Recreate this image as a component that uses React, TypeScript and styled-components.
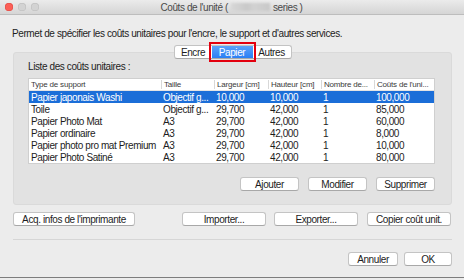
import React from "react";
import styled, { createGlobalStyle } from "styled-components";

const GlobalStyle = createGlobalStyle`
  html, body {
    margin: 0;
    padding: 0;
    background: #ececec;
  }
  body {
    font-family: "Liberation Sans", Arial, sans-serif;
    color: #1d1d1d;
    letter-spacing: -0.4px;
  }
`;

const Window = styled.div`
  width: 464px;
  height: 278px;
  background: #ececec;
  border-bottom: 1px solid #7d7d7d;
  box-sizing: border-box;
  display: flex;
  flex-direction: column;
`;

const TitleBar = styled.div`
  height: 15px;
  box-sizing: border-box;
  border-bottom: 1px solid #bdbdbd;
  background: linear-gradient(#ebebeb, #d5d5d5);
  position: relative;
  display: flex;
  align-items: center;
  justify-content: center;
`;

const Lights = styled.div`
  position: absolute;
  left: 5px;
  top: 3px;
  display: flex;
  gap: 5px;
`;

const Light = styled.span<{ $color: string; $edge: string }>`
  width: 8px;
  height: 8px;
  border-radius: 50%;
  background: ${(p) => p.$color};
  box-shadow: inset 0 0 0 0.5px ${(p) => p.$edge};
`;

const Title = styled.div`
  font-size: 10px;
  color: #4a4a4a;
  display: flex;
  align-items: center;
  margin-left: -1px;
`;

const Blurred = styled.span`
  display: inline-block;
  width: 39px;
  height: 8px;
  margin: 0 3px 0 3px;
  background: linear-gradient(90deg, #d8d8d8 0, #c9c9c9 40%, #d2d2d2 60%, #c8c8c8 100%);
  filter: blur(1px);
`;

const Body = styled.div`
  padding: 12px 12px 0 13px;
  display: flex;
  flex-direction: column;
`;

const Description = styled.div`
  font-size: 10px;
  line-height: 13px;
  height: 13px;
  margin-left: -1px;
  white-space: nowrap;
`;

const Tabs = styled.div`
  margin-top: 5px;
  display: flex;
  justify-content: center;
  position: relative;
  z-index: 1;
`;

const Segment = styled.div`
  display: flex;
  align-items: center;
  height: 14px;
  background: #fff;
  border: 1px solid #c3c3c3;
  border-bottom-color: #a9a9a9;
  border-radius: 3px;
  box-sizing: border-box;
`;

const Tab = styled.div<{ $active?: boolean; $w: number }>`
  width: ${(p) => p.$w}px;
  height: 100%;
  font-size: 10px;
  display: flex;
  align-items: center;
  justify-content: center;
  color: ${(p) => (p.$active ? "#fff" : "#1d1d1d")};
  background: ${(p) => (p.$active ? "linear-gradient(#5aa2fa, #2a7ff5)" : "transparent")};
  position: relative;
  ${(p) =>
    p.$active &&
    `
    &::after {
      content: "";
      position: absolute;
      left: -3px;
      right: -3px;
      top: -4px;
      bottom: -4px;
      border: 2px solid #e3000e;
    }
  `}
`;

const Group = styled.div`
  margin-top: -7px;
  background: #e2e2e2;
  border: 1px solid #dadada;
  border-radius: 3px;
  padding: 8px 16px 13px 14px;
  display: flex;
  flex-direction: column;
`;

const GroupLabel = styled.div`
  font-size: 10px;
  line-height: 12px;
  height: 12px;
`;

const TableBox = styled.div`
  margin-top: 5px;
  height: 86px;
  background: #fff;
  border: 1px solid #cfcfcf;
  box-sizing: border-box;
  display: flex;
  flex-direction: column;
`;

const Row = styled.div<{ $cols: string; $selected?: boolean; $header?: boolean }>`
  display: grid;
  grid-template-columns: ${(p) => p.$cols};
  height: ${(p) => (p.$header ? 11 : 12)}px;
  align-items: center;
  background: ${(p) => (p.$selected ? "#1b6ed8" : "transparent")};
  color: ${(p) => (p.$selected ? "#fff" : "#1d1d1d")};
  font-size: ${(p) => (p.$header ? "8px" : "10px")};
  ${(p) => p.$header && "color: #3a3a3a; letter-spacing: -0.2px; border-bottom: 1px solid #e4e4e4;"}
`;

const HeadCell = styled.div<{ $first?: boolean }>`
  height: 9px;
  line-height: 9px;
  padding-left: 2px;
  white-space: nowrap;
  overflow: hidden;
  border-left: ${(p) => (p.$first ? "none" : "1px solid #d8d8d8")};
`;

const Cell = styled.div`
  padding-left: 2px;
  white-space: nowrap;
  overflow: hidden;
`;

const ButtonRow = styled.div<{ $mt: number; $gap: number; $justify?: string }>`
  margin-top: ${(p) => p.$mt}px;
  display: flex;
  gap: ${(p) => p.$gap}px;
  justify-content: ${(p) => p.$justify || "flex-end"};
`;

const Button = styled.div<{ $w: number; $ml?: number }>`
  width: ${(p) => p.$w}px;
  height: 14px;
  margin-left: ${(p) => p.$ml || 0}px;
  box-sizing: border-box;
  background: #fff;
  border: 1px solid #c4c4c4;
  border-bottom-color: #a8a8a8;
  border-radius: 3px;
  font-size: 10px;
  display: flex;
  align-items: center;
  justify-content: center;
  white-space: nowrap;
`;

const Separator = styled.div`
  margin-top: 13px;
  height: 1px;
  background: #d6d6d6;
`;

const cols = "132px 53px 54px 53px 53px 1fr";

const headers = [
  "Type de support",
  "Taille",
  "Largeur [cm]",
  "Hauteur [cm]",
  "Nombre de...",
  "Coûts de l'uni...",
];

const rows = [
  ["Papier japonais Washi", "Objectif g...", "10,000", "10,000", "1", "100,000"],
  ["Toile", "Objectif g...", "29,700", "42,000", "1", "85,000"],
  ["Papier Photo Mat", "A3", "29,700", "42,000", "1", "60,000"],
  ["Papier ordinaire", "A3", "29,700", "42,000", "1", "8,000"],
  ["Papier photo pro mat Premium", "A3", "29,700", "42,000", "1", "10,000"],
  ["Papier Photo Satiné", "A3", "29,700", "42,000", "1", "80,000"],
];

const App: React.FC = () => {
  return (
    <>
      <GlobalStyle />
      <Window>
        <TitleBar>
          <Lights>
            <Light $color="#fc5f57" $edge="#de4640" />
            <Light $color="#d3d3d3" $edge="#bcbcbc" />
            <Light $color="#d3d3d3" $edge="#bcbcbc" />
          </Lights>
          <Title>
            Coûts de l'unité (<Blurred /> series )
          </Title>
        </TitleBar>
        <Body>
          <Description>
            Permet de spécifier les coûts unitaires pour l'encre, le support et d'autres services.
          </Description>
          <Tabs>
            <Segment>
              <Tab $w={37}>Encre</Tab>
              <Tab $w={41} $active>
                Papier
              </Tab>
              <Tab $w={38}>Autres</Tab>
            </Segment>
          </Tabs>
          <Group>
            <GroupLabel>Liste des coûts unitaires :</GroupLabel>
            <TableBox>
              <Row $cols={cols} $header>
                {headers.map((h, i) => (
                  <HeadCell key={h} $first={i === 0}>
                    {h}
                  </HeadCell>
                ))}
              </Row>
              {rows.map((r, i) => (
                <Row key={r[0]} $cols={cols} $selected={i === 0}>
                  {r.map((c, j) => (
                    <Cell key={j}>{c}</Cell>
                  ))}
                </Row>
              ))}
            </TableBox>
            <ButtonRow $mt={13} $gap={9}>
              <Button $w={59}>Ajouter</Button>
              <Button $w={59}>Modifier</Button>
              <Button $w={59}>Supprimer</Button>
            </ButtonRow>
          </Group>
          <ButtonRow $mt={7} $gap={8} $justify="flex-start">
            <Button $w={122}>Acq. infos de l'imprimante</Button>
            <Button $w={84} $ml={39}>
              Importer...
            </Button>
            <Button $w={84}>Exporter...</Button>
            <Button $w={84} $ml={1}>
              Copier coût unit.
            </Button>
          </ButtonRow>
          <Separator />
          <ButtonRow $mt={12} $gap={6}>
            <Button $w={50}>Annuler</Button>
            <Button $w={48}>OK</Button>
          </ButtonRow>
        </Body>
      </Window>
    </>
  );
};

export default App;
